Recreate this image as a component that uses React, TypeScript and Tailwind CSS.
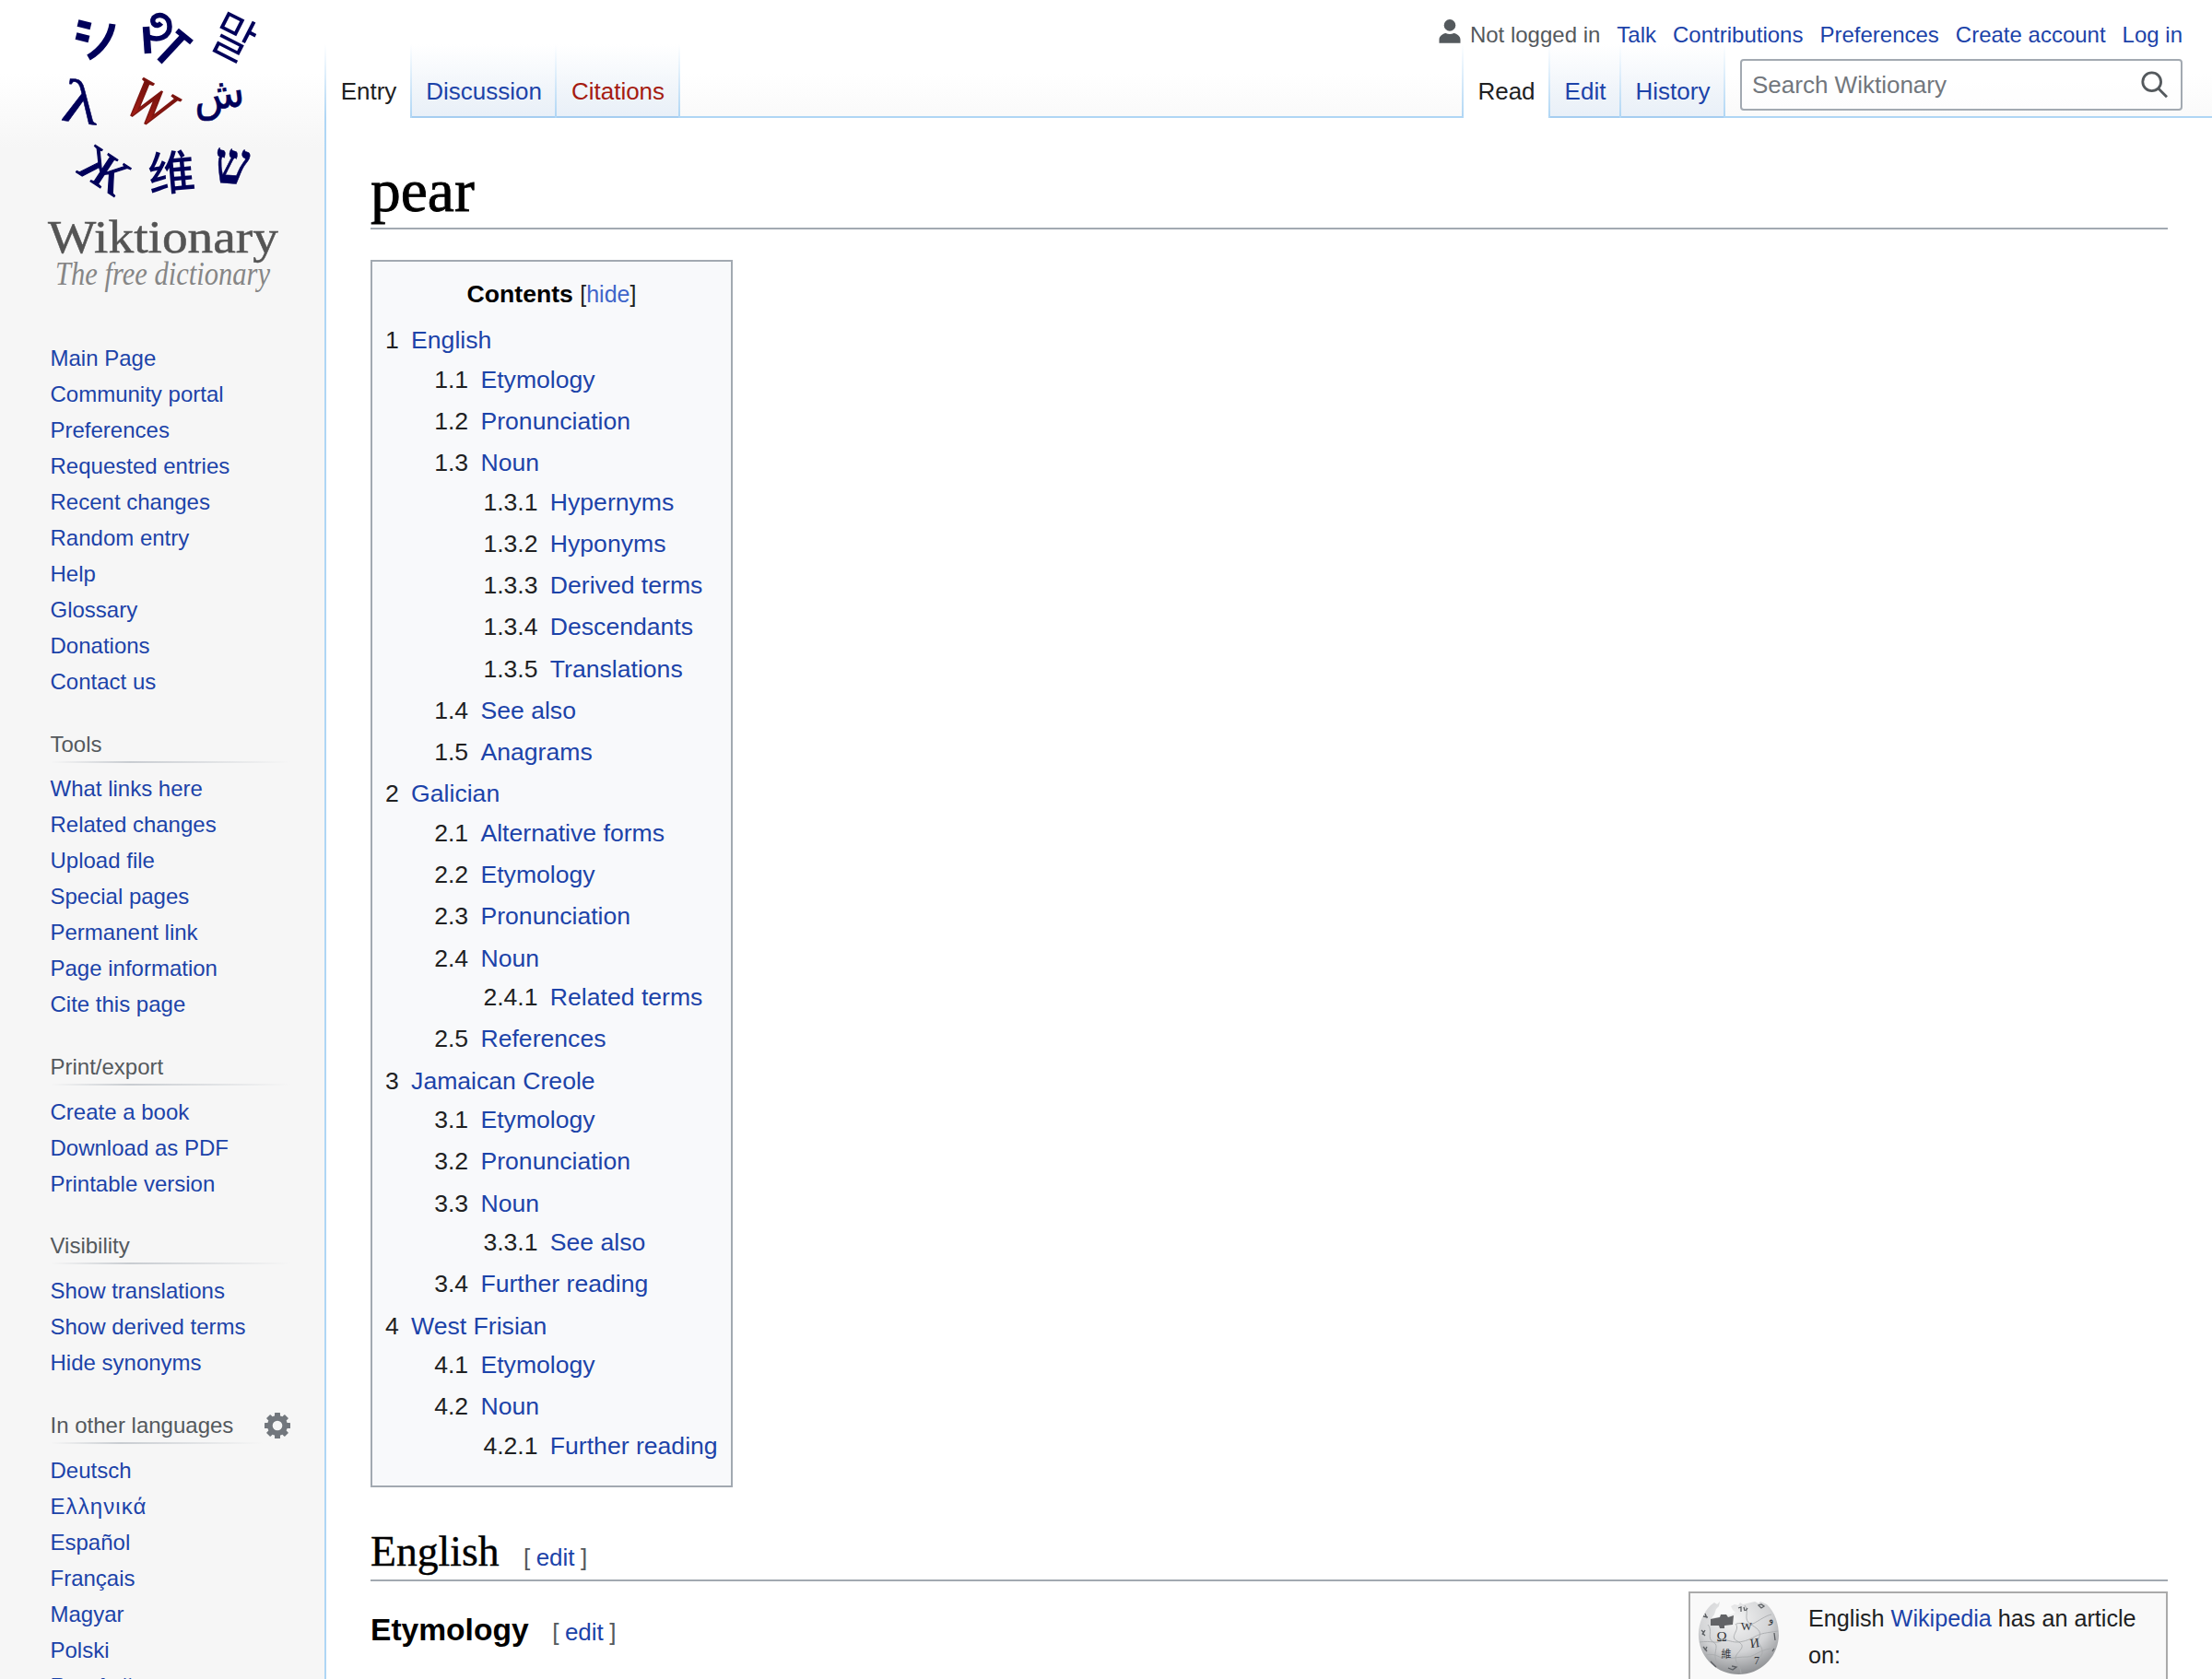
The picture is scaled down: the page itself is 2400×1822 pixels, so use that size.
import React from "react";

const LINK = "text-[#1c43a9]";

const navLinks = ["Main Page", "Community portal", "Preferences", "Requested entries", "Recent changes", "Random entry", "Help", "Glossary", "Donations", "Contact us"];

const portals = [
  { title: "Tools", links: ["What links here", "Related changes", "Upload file", "Special pages", "Permanent link", "Page information", "Cite this page"] },
  { title: "Print/export", links: ["Create a book", "Download as PDF", "Printable version"] },
  { title: "Visibility", links: ["Show translations", "Show derived terms", "Hide synonyms"] },
  { title: "In other languages", gear: true, links: ["Deutsch", "Ελληνικά", "Español", "Français", "Magyar", "Polski", "Română"] },
];

type Entry = { n: string; t: string; c?: Entry[] };

const toc: Entry[] = [
  {
    n: "1", t: "English", c: [
      { n: "1.1", t: "Etymology" },
      { n: "1.2", t: "Pronunciation" },
      {
        n: "1.3", t: "Noun", c: [
          { n: "1.3.1", t: "Hypernyms" },
          { n: "1.3.2", t: "Hyponyms" },
          { n: "1.3.3", t: "Derived terms" },
          { n: "1.3.4", t: "Descendants" },
          { n: "1.3.5", t: "Translations" },
        ],
      },
      { n: "1.4", t: "See also" },
      { n: "1.5", t: "Anagrams" },
    ],
  },
  {
    n: "2", t: "Galician", c: [
      { n: "2.1", t: "Alternative forms" },
      { n: "2.2", t: "Etymology" },
      { n: "2.3", t: "Pronunciation" },
      { n: "2.4", t: "Noun", c: [{ n: "2.4.1", t: "Related terms" }] },
      { n: "2.5", t: "References" },
    ],
  },
  {
    n: "3", t: "Jamaican Creole", c: [
      { n: "3.1", t: "Etymology" },
      { n: "3.2", t: "Pronunciation" },
      { n: "3.3", t: "Noun", c: [{ n: "3.3.1", t: "See also" }] },
      { n: "3.4", t: "Further reading" },
    ],
  },
  {
    n: "4", t: "West Frisian", c: [
      { n: "4.1", t: "Etymology" },
      { n: "4.2", t: "Noun", c: [{ n: "4.2.1", t: "Further reading" }] },
    ],
  },
];

function TocList({ items, nested }: { items: Entry[]; nested?: boolean }) {
  return (
    <ul className={nested ? "ml-[53.2px]" : ""}>
      {items.map((e) => (
        <li key={e.n} className="mb-[2.66px] leading-[42.56px]">
          <div className="flex">
            <span className="pr-[13.3px] text-[#202122]">{e.n}</span>
            <a className={LINK}>{e.t}</a>
          </div>
          {e.c && <TocList items={e.c} nested />}
        </li>
      ))}
    </ul>
  );
}

function Logo() {
  return (
    <svg width="270" height="320" viewBox="40 0 270 320" className="block overflow-visible">
      <defs>
        <linearGradient id="w" x1="0" y1="0" x2="0" y2="1">
          <stop offset="0" stopColor="#5c0a08" />
          <stop offset="1" stopColor="#b8241a" />
        </linearGradient>
      </defs>
      <g fill="none" stroke="#00005a" strokeWidth="7">
        <path d="M84.500 25L98.500 28.500M82.500 39L96.500 42.500" strokeWidth="7.500" />
        <path d="M122 26C120 41 109 55 96 62.500" />
      </g>
      <g fill="none" stroke="#00005a">
        <path d="M158.500 29L160.500 58" strokeWidth="7.500" />
        <path d="M161 40C172 45 184 40 184 29C184 17 173 14 167 19C163 25 170 31 175 25" strokeWidth="5.500" />
        <path d="M173 67L200 38" strokeWidth="7" />
        <path d="M192 33L208 46" strokeWidth="6" />
      </g>
      <g fill="#00005a" textAnchor="middle">
        <text transform="translate(253 41) rotate(27) scale(0.97 1.1)" y="18" fontSize="50" fontFamily="'Noto Sans CJK KR', sans-serif">말</text>
        <text transform="translate(88 112) rotate(8) scale(1.22 0.97)" y="22" fontSize="68" fontFamily="'Liberation Serif', serif" stroke="#00005a" strokeWidth="0.500">λ</text>
        <text transform="translate(238 110) rotate(-8)" y="8" fontSize="46" fontFamily="'DejaVu Sans', sans-serif" stroke="#00005a" strokeWidth="0.600">ش</text>
        <text transform="translate(113 185) rotate(33)" y="18" fontSize="55" fontFamily="'Liberation Serif', serif" stroke="#00005a" strokeWidth="1.200">Ж</text>
        <text transform="translate(186 188) rotate(-5)" y="18" fontSize="51" fontFamily="'Noto Sans CJK SC', sans-serif" fontWeight="500">维</text>
        <text transform="translate(252 177) rotate(4) scale(0.92 1.1)" y="20" fontSize="58" fontFamily="'Liberation Serif', serif" fontWeight="700" stroke="#00005a" strokeWidth="0.500">ש</text>
      </g>
      <text transform="translate(162 113) rotate(30) scale(0.97 1.08)" y="18" fontSize="58" fontFamily="'Liberation Serif', serif" fontStyle="italic" textAnchor="middle" fill="url(#w)" stroke="#7d1510" strokeWidth="1.500">W</text>
      <text x="52" y="274" fontSize="50" textLength="250" lengthAdjust="spacingAndGlyphs" fontFamily="'Liberation Serif', serif" fill="#545454" stroke="#545454" strokeWidth="0.500">Wiktionary</text>
      <text x="60" y="309" fontSize="36" textLength="233" lengthAdjust="spacingAndGlyphs" fontFamily="'Liberation Serif', serif" fontStyle="italic" fill="#868686">The free dictionary</text>
    </svg>
  );
}

function Gear() {
  return (
    <svg width="28" height="28" viewBox="0 0 28 28">
      <g fill="#72777d">
        {[0, 45, 90, 135].map((a) => (
          <rect key={a} x="11" y="0" width="6" height="28" rx="0.500" transform={`rotate(${a} 14 14)`} />
        ))}
        <circle cx="14" cy="14" r="11" />
      </g>
      <circle cx="14" cy="14" r="5.300" fill="#f6f6f6" />
    </svg>
  );
}

function Globe() {
  return (
    <svg width="90" height="84" viewBox="0 0 90 84" className="block">
      <defs>
        <radialGradient id="g" cx="0.45" cy="0.25" r="0.75">
          <stop offset="0" stopColor="#f4f4f4" />
          <stop offset="0.6" stopColor="#d2d3d5" />
          <stop offset="1" stopColor="#8e9093" />
        </radialGradient>
      </defs>
      <path d="M14 6L18 3L21 5L24 2L23 7L20 10L18 16L15 20L36 16L41 14L38 11L36 7L40 5L44 6L46 3L49 5L62 2L66 4L68 2L75 5C84 14 88 26 88 39C87 62 69 81 44.500 81C21 81 2 63 1 40C0 27 6 14 14 6Z" fill="url(#g)" />
      <path d="M14 21L24 19L25 16L31 16L33 19L39 17L38 27L29 28L29 31L24 31L23 28L14 28Z" fill="#626366" />
      <g fill="none" stroke="#a9abae" strokeWidth="0.900">
        <path d="M2 46C15 44 20 48 25 45S36 46 42 46S55 44 62 40S75 36 87 34" />
        <path d="M41 26C47 33 33 40 43 45S46 54 42 60S47 72 47 80M11 27C17 33 9 42 17 46S14 59 22 70" />
        <path d="M51 6C57 14 48 21 58 27S69 36 66 42S75 53 68 62M9 60C20 57 25 65 32 64S47 62 54 62S66 55 79 53" />
        <path d="M42 26C50 24 54 29 60 26S74 17 80 16" />
      </g>
      <g fill="none" stroke="#5c5f63" strokeWidth="1.300">
        <path d="M44 9L47 8L47 13M50 8L51 12M52 12L54 9M66 6L69 9L72 7L69 5ZM6 18L11 19M8 15L10 20M4 33L7 36M5 36L8 39M5 38L8 33M6 51L10 56M10 51L8 55M83 36L84 44M81 56L83 53M33 74L38 76L42 73L37 72M14 67L20 73" />
      </g>
      <g fill="#33363a" fontFamily="'Liberation Serif', serif" textAnchor="middle">
        <text x="26" y="44.500" fontSize="15">Ω</text>
        <text x="53" y="32.500" fontSize="13">W</text>
        <text x="62" y="51.500" fontSize="14" transform="rotate(-8 62 47)">И</text>
        <text x="31" y="63" fontSize="11" fontFamily="'Noto Sans CJK TC', sans-serif">維</text>
        <text x="64" y="70" fontSize="12">7</text>
        <text x="79" y="25" fontSize="11">و</text>
      </g>
    </svg>
  );
}

function TabLine() {
  return <div className="h-[80px] w-[2px] shrink-0 bg-linear-to-b from-[#afd6f5]/0 to-[#afd6f5]" />;
}

function Tab({ label, w, kind }: { label: string; w: string; kind?: "active" | "new" }) {
  return (
    <div className={`${w} flex h-[80px] shrink-0 justify-center pt-[30px] pl-[1px] text-[26px] leading-[42px] ${kind === "active" ? "text-[#202122] bg-linear-to-b from-white/0 to-white to-30%" : kind === "new" ? "border-b-2 border-[#a5cdf0] bg-linear-to-b from-white/0 to-[#e9f0f8] text-[#a51b11]" : "border-b-2 border-[#a5cdf0] bg-linear-to-b from-white/0 to-[#e9f0f8] text-[#1c43a9]"}`}>
      <span>{label}</span>
    </div>
  );
}

function EditLink() {
  return (
    <span className="font-['Liberation_Sans',Arial,sans-serif] text-[26px] font-normal leading-none text-[#54595d]">
      [<a className="mx-[6.500px] text-[#1c43a9]">edit</a>]
    </span>
  );
}

export default function App() {
  return (
    <div className="flex h-[1822px] w-[2400px] overflow-hidden bg-[#f6f6f6] font-['Liberation_Sans',Arial,sans-serif] text-[#202122]">
      <aside className="flex w-[352px] shrink-0 flex-col bg-[linear-gradient(to_bottom,#ffffff_0,#ffffff_80px,#f6f6f6_160px)] text-[24px] leading-[27px]">
        <div className="h-[320px] pl-[40px]">
          <Logo />
        </div>
        <ul className="mt-[49px] pl-[54.500px]">
          {navLinks.map((l) => (
            <li key={l} className="py-[6px]"><a className={LINK}>{l}</a></li>
          ))}
        </ul>
        {portals.map((p) => (
          <section key={p.title} className="pl-[54.500px]">
            <div className="flex h-[68.500px] items-end justify-between pr-[37px]">
              <div className={p.gear ? "w-[230px]" : "w-[260px]"}>
                <h3 className="pb-[5px] text-[#54595d]">{p.title}</h3>
                <div className="h-[2px] bg-linear-to-r from-[#c8ccd1]/0 via-[#c8ccd1] via-33% to-[#c8ccd1]/0" />
              </div>
              {p.gear && <div className="mb-[6px]"><Gear /></div>}
            </div>
            <ul className="pt-[8.900px]">
              {p.links.map((l) => (
                <li key={l} className="py-[6px]">
                  <a className={l === "Ελληνικά" ? "tracking-[1.1px] text-[#1c43a9]" : LINK}>{l}</a>
                </li>
              ))}
            </ul>
          </section>
        ))}
      </aside>

      <div className="flex min-w-0 grow flex-col">
        <header className="flex h-[128px] flex-col bg-[linear-gradient(to_bottom,#ffffff_0,#ffffff_80px,#f6f6f6_160px)]">
          <div className="relative z-10 flex h-[48px] items-start justify-end gap-[18px] pr-[32px] pt-[24px] text-[24px] leading-[27px]">
            <div className="flex gap-[10px] text-[#54595d]">
              <svg width="24" height="27" viewBox="0 0 24 27" className="-mt-[3px]" fill="#54595d">
                <circle cx="12" cy="6.400" r="6.300" />
                <path d="M0.500 25.700V22C0.500 18 4.500 15.500 7.500 15C10.500 16.400 13.500 16.400 16.500 15C19.500 15.500 23.500 18 23.500 22V25.700Z" />
              </svg>
              <span>Not logged in</span>
            </div>
            {["Talk", "Contributions", "Preferences", "Create account", "Log in"].map((l) => (
              <a key={l} className={LINK}>{l}</a>
            ))}
          </div>
          <div className="flex h-[80px]">
            <TabLine />
            <Tab label="Entry" w="w-[91px]" kind="active" />
            <TabLine />
            <Tab label="Discussion" w="w-[155px]" />
            <TabLine />
            <Tab label="Citations" w="w-[132px]" kind="new" />
            <TabLine />
            <div className="grow border-b-2 border-[#afd6f5]" />
            <TabLine />
            <Tab label="Read" w="w-[92px]" kind="active" />
            <TabLine />
            <Tab label="Edit" w="w-[75px]" />
            <TabLine />
            <Tab label="History" w="w-[111px]" />
            <TabLine />
            <div className="w-[528px] border-b-2 border-[#afd6f5] pl-[16px] pr-[32px] pt-[16px]">
              <div className="flex h-[56px] items-center justify-between rounded-[4px] border-2 border-[#a2a9b1] bg-white/50 pl-[11px] pr-[14px] text-[26px] text-[#72777d]">
                <span>Search Wiktionary</span>
                <svg width="30" height="30" viewBox="0 0 30 30" fill="none" stroke="#54595d" strokeWidth="2.800">
                  <circle cx="12.700" cy="11.800" r="9.900" />
                  <path d="M19.800 18.900L29 28.200" />
                </svg>
              </div>
            </div>
          </div>
        </header>

        <main className="flex grow flex-col items-start border-l-2 border-[#afd6f5] bg-white pl-[48px] pr-[48px]">
          <h1 className="flex h-[121px] w-[1950px] items-end border-b-2 border-[#a2a9b1] pb-[4px] font-['Liberation_Serif',serif] text-[65.500px] leading-[72px] text-black [-webkit-text-stroke:0.8px_black]">pear</h1>

          <nav className="mt-[33px] h-[1332px] w-[393px] shrink-0 border-2 border-[#a2a9b1] bg-[#f8f9fb] px-[14px] pt-[14px] text-[26.600px] leading-[42.560px]">
            <div className="mb-[7.700px] text-center">
              <b className="text-black">Contents</b>{" "}
              <span className="text-[25px]">[<a className="text-[#4065ca]">hide</a>]</span>
            </div>
            <TocList items={toc} />
          </nav>

          <h2 className="flex h-[102px] w-[1950px] shrink-0 items-baseline border-b-2 border-[#a2a9b1] pt-[45px] font-['Liberation_Serif',serif] text-[45.700px] leading-[50px] text-black">
            <span className="mr-[26.300px] [-webkit-text-stroke:0.4px_black]">English</span>
            <EditLink />
          </h2>

          <div className="flex w-[1950px] items-start justify-between pt-[11px]">
            <h3 className="flex items-baseline gap-[25.500px] pt-[15px] text-[33.600px] font-bold leading-[54px] text-black">
              Etymology
              <EditLink />
            </h3>
            <aside className="flex h-[140px] w-[520px] border-2 border-[#aaaaaa] bg-[#f9f9f9] pl-[8px] pt-[7px] text-[25.200px] leading-[40px]">
              <Globe />
              <p className="ml-[30px]">
                English <a className={LINK}>Wikipedia</a> has an article<br />on:
              </p>
            </aside>
          </div>
        </main>
      </div>
    </div>
  );
}
